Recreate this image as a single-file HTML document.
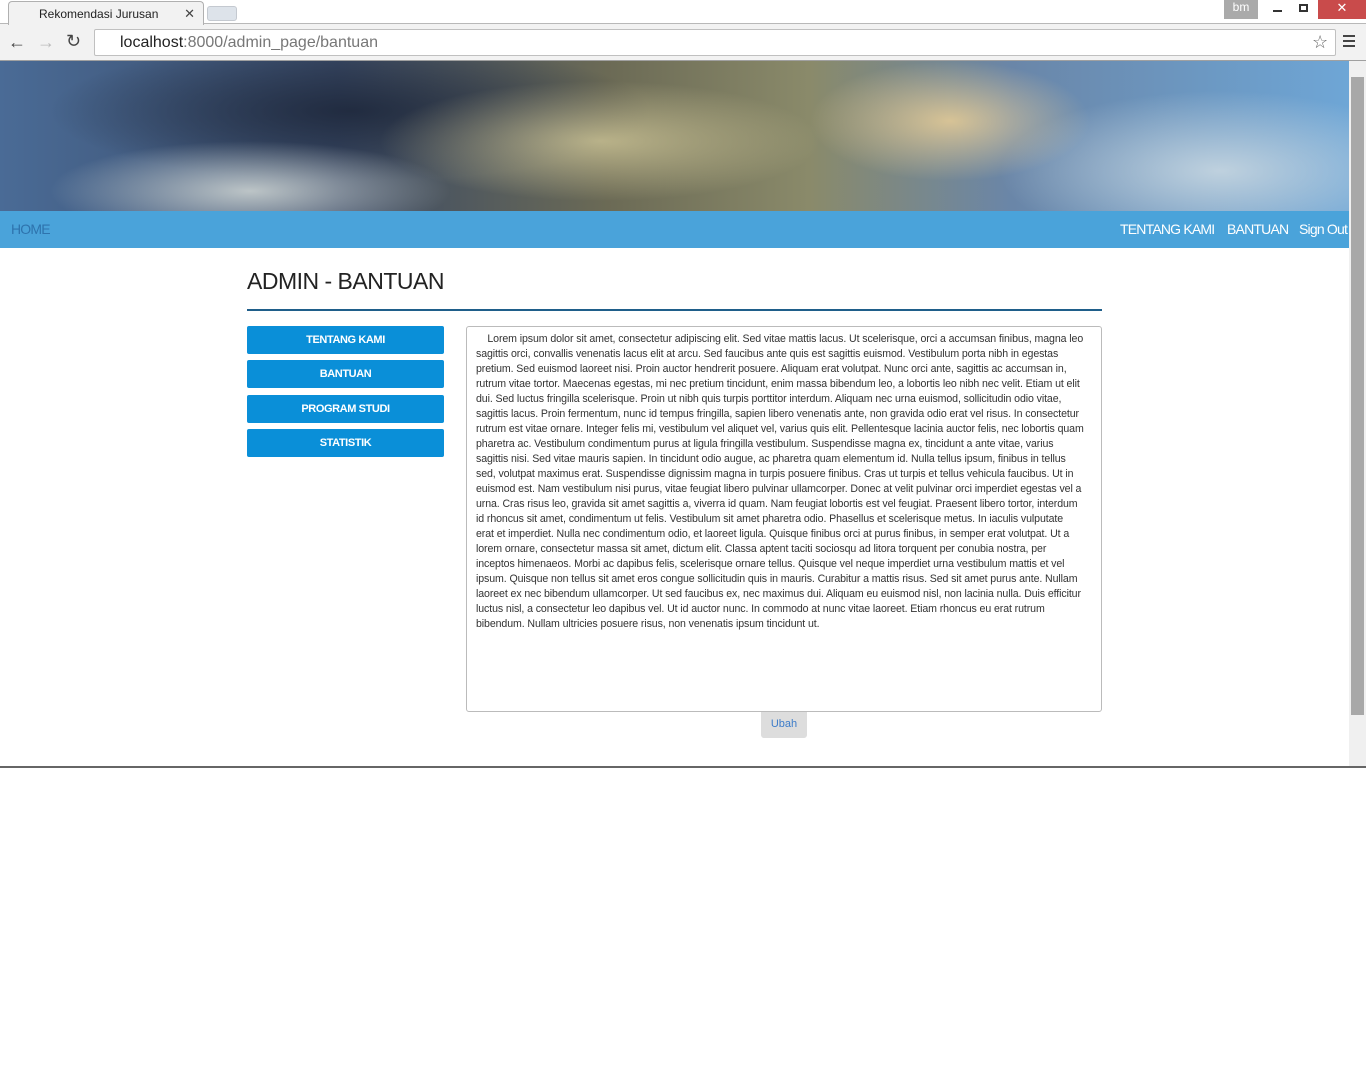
<!DOCTYPE html>
<html><head><meta charset="utf-8"><style>
*{margin:0;padding:0;box-sizing:border-box}
body{width:1366px;height:1066px;background:#fff;font-family:"Liberation Sans",Arial,sans-serif;position:relative;overflow:hidden}
.chrome{position:absolute;left:0;top:0;width:1366px;height:61px;background:#f2f2f2;border-bottom:1px solid #a0a0a0}
.tabbar{height:24px;background:#fff;border-bottom:1px solid #b8b8b8}
.tab{position:absolute;left:8px;top:1px;width:196px;height:24px;background:#f2f2f2;border:1px solid #b0b0b0;border-bottom:none;border-radius:4px 4px 0 0;font-size:12px;color:#222;padding:5px 0 0 30px}
.tab .x{position:absolute;right:8px;top:4px;font-size:13px;color:#444}
.newtab{position:absolute;left:207px;top:6px;width:30px;height:15px;background:#dde3ea;border:1px solid #c4c9d0;border-radius:3px}
.url{position:absolute;left:94px;top:29px;width:1242px;height:27px;background:#fff;border:1px solid #c0c0c0;border-radius:2px;font-size:16px;color:#222;padding:4px 0 0 25px}
.url span{color:#777}
.hero{position:absolute;left:0;top:61px;width:1349px;height:150px;background:
radial-gradient(ellipse 140px 60px at 950px 60px,rgba(240,210,150,.8),transparent),
radial-gradient(ellipse 220px 60px at 600px 80px,rgba(220,210,160,.7),transparent),
radial-gradient(ellipse 200px 50px at 250px 130px,rgba(220,225,220,.8),transparent),
radial-gradient(ellipse 220px 80px at 1220px 110px,rgba(200,215,225,.9),transparent),
radial-gradient(ellipse 300px 70px at 350px 50px,rgba(30,40,60,.9),transparent),
linear-gradient(90deg,#4a6b96 0%,#3a4a66 25%,#6b6a55 45%,#8a8a6a 60%,#6a86a8 75%,#6ea6d6 100%)}
.nav{position:absolute;left:0;top:211px;width:1349px;height:37px;background:#4aa3da;color:#fff;font-size:14px;overflow:hidden}
.nav a{position:absolute;top:10px;letter-spacing:-.8px;white-space:nowrap}
.sb{position:absolute;left:1349px;top:61px;width:17px;height:706px;background:#f0f0f0}
.sb div{position:absolute;left:2px;top:16px;width:13px;height:638px;background:#a8a8a8}
h1{position:absolute;left:247px;top:268px;font-size:23px;font-weight:normal;color:#222;letter-spacing:-.5px}
.hr{position:absolute;left:247px;top:309px;width:855px;height:2px;background:#1f5e8a}
.btn{position:absolute;left:247px;width:197px;height:28px;background:#0a8fd8;color:#fff;font-size:11px;font-weight:bold;text-align:center;line-height:28px;border-radius:2px;letter-spacing:-.4px}
.ta{position:absolute;left:466px;top:326px;width:636px;height:386px;border:1px solid #bbb;border-radius:3px;padding:5px 9px;font-size:10.6px;line-height:15px;color:#333;letter-spacing:-.1px;white-space:nowrap}
.ubah{position:absolute;left:761px;top:712px;width:46px;height:26px;background:#ddd;border-radius:0 0 3px 3px;color:#3d7cc9;font-size:11px;text-align:center;line-height:24px}
.bottom{position:absolute;left:0;top:766px;width:1366px;height:2px;background:#666}
</style></head><body>
<div class="chrome">
<div class="tabbar"></div>
<div class="tab">Rekomendasi Jurusan<span class="x">✕</span></div>
<div class="newtab"></div>
<div style="position:absolute;left:1224px;top:0;width:34px;height:19px;background:#aaa;color:#fff;font-size:12px;text-align:center">bm</div>
<div style="position:absolute;left:1318px;top:0;width:48px;height:19px;background:#c94b4b;color:#fff;font-size:13px;text-align:center">✕</div>
<div style="position:absolute;left:1273px;top:10px;width:9px;height:2px;background:#333"></div>
<div style="position:absolute;left:1299px;top:4px;width:9px;height:8px;border:2px solid #333"></div>
<div style="position:absolute;left:8px;top:32px;font-size:18px;color:#444">&#8592;</div>
<div style="position:absolute;left:37px;top:32px;font-size:18px;color:#bbb">&#8594;</div>
<div style="position:absolute;left:66px;top:31px;font-size:18px;color:#444">&#8635;</div>
<div class="url">localhost<span>:8000/admin_page/bantuan</span></div>
<div style="position:absolute;left:1312px;top:32px;font-size:18px;color:#666">☆</div>
<div style="position:absolute;left:1343px;top:35px;width:12px;height:12px;border-top:2px solid #444;border-bottom:2px solid #444"><div style="margin-top:3px;height:2px;background:#444"></div></div>
</div>
<div class="hero"></div>
<div class="nav"><a style="left:11px;color:#2e73ad">HOME</a><a style="left:1120px">TENTANG KAMI</a><a style="left:1227px">BANTUAN</a><a style="left:1299px">Sign Out</a></div>
<div class="sb"><div></div></div>
<h1>ADMIN - BANTUAN</h1>
<div class="hr"></div>
<div class="btn" style="top:326px">TENTANG KAMI</div>
<div class="btn" style="top:360px">BANTUAN</div>
<div class="btn" style="top:395px">PROGRAM STUDI</div>
<div class="btn" style="top:429px">STATISTIK</div>
<div class="ta">&nbsp;&nbsp;&nbsp;&nbsp;Lorem ipsum dolor sit amet, consectetur adipiscing elit. Sed vitae mattis lacus. Ut scelerisque, orci a accumsan finibus, magna leo<br>sagittis orci, convallis venenatis lacus elit at arcu. Sed faucibus ante quis est sagittis euismod. Vestibulum porta nibh in egestas<br>pretium. Sed euismod laoreet nisi. Proin auctor hendrerit posuere. Aliquam erat volutpat. Nunc orci ante, sagittis ac accumsan in,<br>rutrum vitae tortor. Maecenas egestas, mi nec pretium tincidunt, enim massa bibendum leo, a lobortis leo nibh nec velit. Etiam ut elit<br>dui. Sed luctus fringilla scelerisque. Proin ut nibh quis turpis porttitor interdum. Aliquam nec urna euismod, sollicitudin odio vitae,<br>sagittis lacus. Proin fermentum, nunc id tempus fringilla, sapien libero venenatis ante, non gravida odio erat vel risus. In consectetur<br>rutrum est vitae ornare. Integer felis mi, vestibulum vel aliquet vel, varius quis elit. Pellentesque lacinia auctor felis, nec lobortis quam<br>pharetra ac. Vestibulum condimentum purus at ligula fringilla vestibulum. Suspendisse magna ex, tincidunt a ante vitae, varius<br>sagittis nisi. Sed vitae mauris sapien. In tincidunt odio augue, ac pharetra quam elementum id. Nulla tellus ipsum, finibus in tellus<br>sed, volutpat maximus erat. Suspendisse dignissim magna in turpis posuere finibus. Cras ut turpis et tellus vehicula faucibus. Ut in<br>euismod est. Nam vestibulum nisi purus, vitae feugiat libero pulvinar ullamcorper. Donec at velit pulvinar orci imperdiet egestas vel a<br>urna. Cras risus leo, gravida sit amet sagittis a, viverra id quam. Nam feugiat lobortis est vel feugiat. Praesent libero tortor, interdum<br>id rhoncus sit amet, condimentum ut felis. Vestibulum sit amet pharetra odio. Phasellus et scelerisque metus. In iaculis vulputate<br>erat et imperdiet. Nulla nec condimentum odio, et laoreet ligula. Quisque finibus orci at purus finibus, in semper erat volutpat. Ut a<br>lorem ornare, consectetur massa sit amet, dictum elit. Classa aptent taciti sociosqu ad litora torquent per conubia nostra, per<br>inceptos himenaeos. Morbi ac dapibus felis, scelerisque ornare tellus. Quisque vel neque imperdiet urna vestibulum mattis et vel<br>ipsum. Quisque non tellus sit amet eros congue sollicitudin quis in mauris. Curabitur a mattis risus. Sed sit amet purus ante. Nullam<br>laoreet ex nec bibendum ullamcorper. Ut sed faucibus ex, nec maximus dui. Aliquam eu euismod nisl, non lacinia nulla. Duis efficitur<br>luctus nisl, a consectetur leo dapibus vel. Ut id auctor nunc. In commodo at nunc vitae laoreet. Etiam rhoncus eu erat rutrum<br>bibendum. Nullam ultricies posuere risus, non venenatis ipsum tincidunt ut.</div>
<div class="ubah">Ubah</div>
<div class="bottom"></div>
</body></html>
